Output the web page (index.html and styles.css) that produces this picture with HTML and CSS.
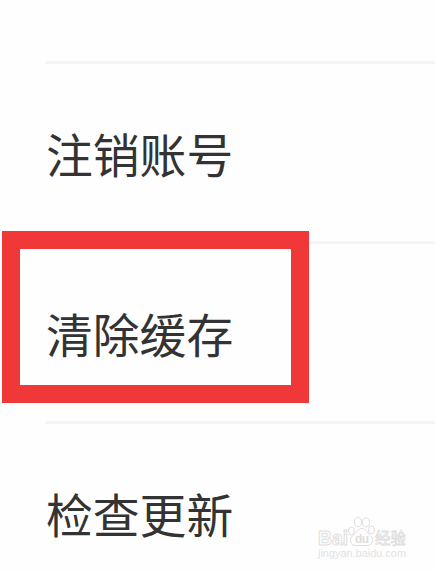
FILE: index.html
```html
<!DOCTYPE html>
<html lang="zh-CN">
<head>
  <meta charset="UTF-8" />
  <meta name="viewport" content="width=device-width, initial-scale=1" />
  <title>设置</title>
  <link rel="stylesheet" href="styles.css">
</head>
<body>

  <div class="menu">
    <div class="item">注销账号</div>
    <div class="item">清除缓存</div>
    <div class="item">检查更新</div>
  </div>

  <div class="highlight"></div>

  <div class="watermark">
    <svg width="94" height="46" viewBox="0 0 94 46">
      <text class="bai" x="2" y="29" textLength="30" lengthAdjust="spacingAndGlyphs">Bai</text>
      <g class="paw">
        <ellipse cx="35.500" cy="15" rx="3" ry="4" />
        <ellipse cx="42" cy="6" rx="3.500" ry="4.500" />
        <ellipse cx="50" cy="6.500" rx="3.500" ry="4.500" />
        <ellipse cx="55.500" cy="14" rx="3" ry="4" />
        <path d="M46 12.500c4 0 5 4 8 7 5 4 2 10-3 10h-11c-5 0-8-6-3-10 4-3 5-7 9-7z" />
      </g>
      <text class="du" x="39" y="27" textLength="14">du</text>
      <text class="cn" x="59" y="28" textLength="31">经验</text>
      <text class="url" x="2" y="41" textLength="88" lengthAdjust="spacingAndGlyphs">jingyan.baidu.com</text>
    </svg>
  </div>

</body>
</html>
```

FILE: styles.css
```css
body {
  margin: 0;
  height: 571px;
  overflow: hidden;
  position: relative;
  background-color: #fefefe;
  font-family: "Noto Sans CJK SC", sans-serif;
  color: #333;
}

.menu {
  padding-top: 61px;
  margin-left: 46px;
}

.item {
  box-sizing: border-box;
  height: 180px;
  border-top: 3px solid #f5f5f5;
  font-size: 46.8px;
  line-height: 178px;
}

.item:last-child {
  height: 149px;
  overflow: hidden;
}

.highlight {
  position: absolute;
  left: 2px;
  top: 231px;
  box-sizing: border-box;
  width: 307px;
  height: 172px;
  border: 18px solid #f03838;
}

.watermark {
  position: absolute;
  left: 316px;
  top: 516px;
  line-height: 0;
  font-family: "Liberation Sans", "Noto Sans CJK SC", sans-serif;
  font-weight: bold;
}

.bai,
.cn,
.paw {
  fill: #fff;
  stroke: #dedede;
  stroke-width: 1;
}

.bai {
  font-size: 20px;
}

.du {
  font-size: 12px;
  fill: #ddd;
}

.cn {
  font-size: 15.5px;
  font-weight: normal;
  stroke-width: 0.8;
}

.url {
  font-size: 11px;
  font-weight: normal;
  fill: #e2e2e2;
}
```
